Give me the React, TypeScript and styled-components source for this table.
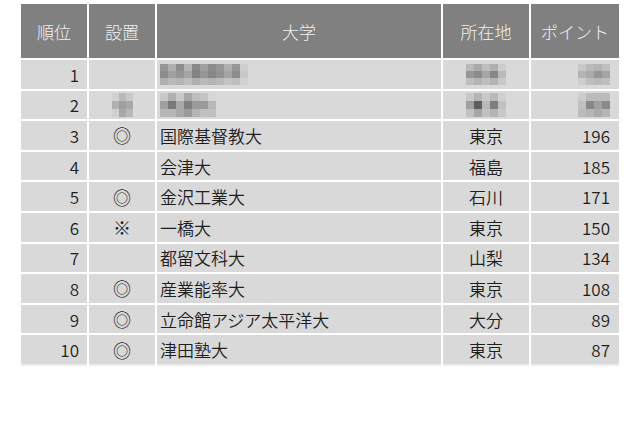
import React from "react";
import styled, { createGlobalStyle } from "styled-components";

const GlobalStyle = createGlobalStyle`
  html, body { margin: 0; padding: 0; background: #ffffff; }
  body { font-family: "Noto Sans CJK JP", "Noto Sans", sans-serif; }
`;

const Page = styled.div`
  padding: 2px 0 0 19px;
  width: 640px;
  height: 426px;
  box-sizing: border-box;
`;

const Table = styled.table`
  table-layout: fixed;
  width: 602px;
  border-collapse: separate;
  border-spacing: 2px;
  font-family: "Noto Sans CJK JP", "Noto Sans", sans-serif;
  font-size: 17px;
  font-weight: 350;
`;

const HeadCell = styled.th`
  height: 54px;
  padding: 0;
  background: #808080;
  color: #f2f2f2;
  font-weight: 300;
  text-align: center;
  vertical-align: middle;
  line-height: 1;
`;

type Align = "left" | "center" | "right";

const Cell = styled.td<{ $align: Align; $pad?: string; $last?: boolean }>`
  height: 28.6px;
  padding: ${(p) => p.$pad ?? "0"};
  background: #d9d9d9;
  color: #1e1e1e;
  text-align: ${(p) => p.$align};
  vertical-align: middle;
  line-height: 1;
  white-space: nowrap;
  box-shadow: ${(p) => (p.$last ? "0 2px 0 #ececec" : "none")};
`;

const Symbol = styled.span`
  font-size: 18px;
`;

const MosaicSvg = styled.svg`
  display: inline-block;
  vertical-align: middle;
`;

type MosaicProps = { cols: number[][]; w: number; h: number };

const Mosaic: React.FC<MosaicProps> = ({ cols, w, h }) => {
  const rows = cols.length;
  const cw = cols[0].length;
  return (
    <MosaicSvg width={cw * w} height={rows * h} viewBox={`0 0 ${cw * w} ${rows * h}`}>
      {cols.map((r, ri) =>
        r.map((v, ci) => (
          <rect
            key={`${ri}-${ci}`}
            x={ci * w}
            y={ri * h}
            width={w}
            height={h}
            fill={`rgb(${v},${v},${v})`}
          />
        ))
      )}
    </MosaicSvg>
  );
};

type Row = {
  rank: number;
  mark: React.ReactNode;
  name: React.ReactNode;
  pref: React.ReactNode;
  pts: React.ReactNode;
};

const rows: Row[] = [
  {
    rank: 1,
    mark: "",
    name: (
      <Mosaic
        w={8}
        h={7}
        cols={[
          [150, 175, 140, 180, 135, 160, 140, 150, 175, 150, 205],
          [140, 160, 150, 165, 130, 150, 135, 145, 165, 140, 200],
          [175, 185, 180, 190, 175, 185, 180, 185, 195, 190, 210],
        ]}
      />
    ),
    pref: (
      <Mosaic
        w={8}
        h={7}
        cols={[
          [185, 170, 190, 175, 205],
          [150, 140, 165, 135, 185],
          [190, 180, 190, 180, 200],
        ]}
      />
    ),
    pts: (
      <Mosaic
        w={8}
        h={7}
        cols={[
          [200, 185, 180, 190],
          [180, 170, 150, 165],
          [205, 190, 185, 190],
        ]}
      />
    ),
  },
  {
    rank: 2,
    mark: (
      <Mosaic
        w={7}
        h={8}
        cols={[
          [208, 184, 200],
          [176, 160, 168],
          [208, 168, 184],
        ]}
      />
    ),
    name: (
      <Mosaic
        w={8}
        h={8}
        cols={[
          [200, 176, 200, 168, 189, 197, 214],
          [160, 122, 169, 127, 153, 154, 184],
          [181, 181, 168, 155, 180, 192, 191],
        ]}
      />
    ),
    pref: (
      <Mosaic
        w={8}
        h={8}
        cols={[
          [200, 181, 200, 184, 208],
          [160, 94, 184, 126, 192],
          [192, 165, 192, 181, 200],
        ]}
      />
    ),
    pts: (
      <Mosaic
        w={8}
        h={8}
        cols={[
          [204, 187, 187, 187],
          [192, 136, 160, 138],
          [187, 181, 170, 181],
        ]}
      />
    ),
  },
  { rank: 3, mark: "◎", name: "国際基督教大", pref: "東京", pts: 196 },
  { rank: 4, mark: "", name: "会津大", pref: "福島", pts: 185 },
  { rank: 5, mark: "◎", name: "金沢工業大", pref: "石川", pts: 171 },
  { rank: 6, mark: "※", name: "一橋大", pref: "東京", pts: 150 },
  { rank: 7, mark: "", name: "都留文科大", pref: "山梨", pts: 134 },
  { rank: 8, mark: "◎", name: "産業能率大", pref: "東京", pts: 108 },
  { rank: 9, mark: "◎", name: "立命館アジア太平洋大", pref: "大分", pts: 89 },
  { rank: 10, mark: "◎", name: "津田塾大", pref: "東京", pts: 87 },
];

export default function App() {
  return (
    <Page>
      <GlobalStyle />
      <Table>
        <colgroup>
          <col style={{ width: 66 }} />
          <col style={{ width: 66 }} />
          <col style={{ width: 284 }} />
          <col style={{ width: 86 }} />
          <col style={{ width: 88 }} />
        </colgroup>
        <thead>
          <tr>
            <HeadCell>順位</HeadCell>
            <HeadCell>設置</HeadCell>
            <HeadCell>大学</HeadCell>
            <HeadCell>所在地</HeadCell>
            <HeadCell>ポイント</HeadCell>
          </tr>
        </thead>
        <tbody>
          {rows.map((r, i) => {
            const last = i === rows.length - 1;
            return (
              <tr key={r.rank}>
                <Cell $last={last} $align="right" $pad="0 8px 0 0">{r.rank}</Cell>
                <Cell $last={last} $align="center">
                  {typeof r.mark === "string" ? <Symbol>{r.mark}</Symbol> : r.mark}
                </Cell>
                <Cell $last={last} $align="left" $pad="0 0 0 3px">{r.name}</Cell>
                <Cell $last={last} $align="center">{r.pref}</Cell>
                <Cell $last={last} $align="right" $pad="0 9px 0 0">{r.pts}</Cell>
              </tr>
            );
          })}
        </tbody>
      </Table>
    </Page>
  );
}
